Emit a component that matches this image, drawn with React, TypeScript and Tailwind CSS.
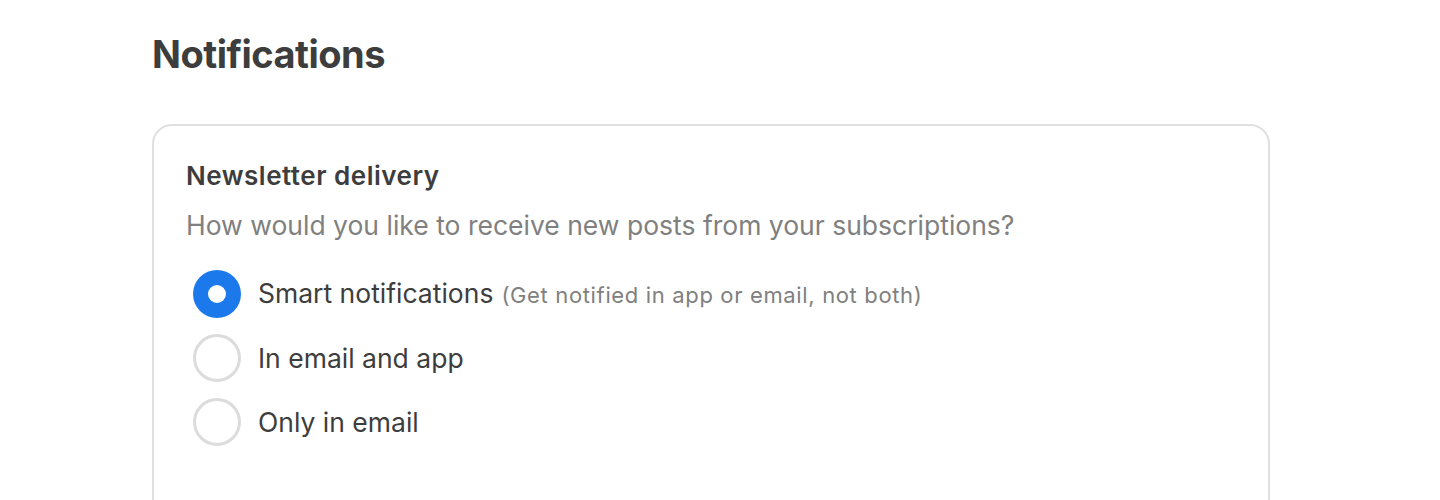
import React from "react";

const options = [
  { label: "Smart notifications", hint: "(Get notified in app or email, not both)", checked: true },
  { label: "In email and app", hint: "", checked: false },
  { label: "Only in email", hint: "", checked: false },
];

export default function App() {
  return (
    <div className="min-h-[500px] bg-white pl-[152px] pt-[30px] text-[#3d3d3d]" style={{ fontFamily: "Inter, 'Noto Sans', sans-serif" }}>
      <h1 className="text-[38px] font-bold leading-[48px] tracking-[-0.5px]">Notifications</h1>
      <div className="mt-[46px] w-[1118px] rounded-[20px] border-2 border-[#e0e0e0] px-[32px] pt-[32px] pb-[80px]">
        <h2 className="text-[26px] font-semibold leading-[36px] tracking-[0.5px] text-[#3d3d3d]">Newsletter delivery</h2>
        <p className="mt-[14px] text-[26.5px] leading-[34px] text-[#808080]">
          How would you like to receive new posts from your subscriptions?
        </p>
        <div className="mt-[28px] flex flex-col gap-[16px] pl-[7px]">
          {options.map((o) => (
            <label key={o.label} className="flex items-center gap-[17px]">
              {o.checked ? (
                <span className="flex h-[48px] w-[48px] items-center justify-center rounded-full bg-[#1b79ec]">
                  <span className="h-[18px] w-[18px] rounded-full bg-white" />
                </span>
              ) : (
                <span className="h-[48px] w-[48px] rounded-full border-[3px] border-[#dcdcdc]" />
              )}
              <span className="text-[26.5px] leading-[34px] text-[#3d3d3d]">
                {o.label}
                {o.hint && <span className="ml-[8px] text-[22px] tracking-[0.65px] text-[#808080]">{o.hint}</span>}
              </span>
            </label>
          ))}
        </div>
      </div>
    </div>
  );
}
